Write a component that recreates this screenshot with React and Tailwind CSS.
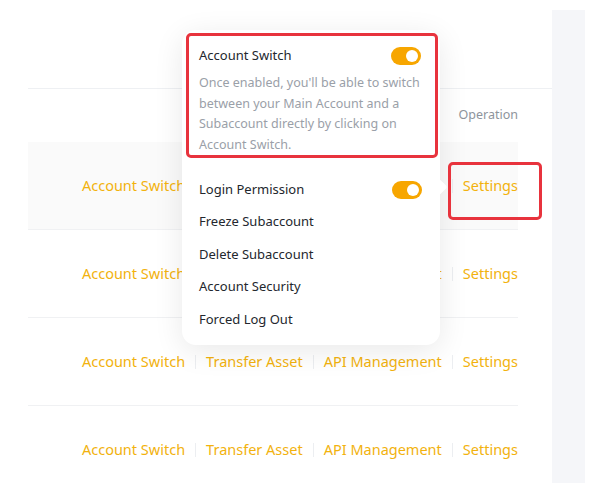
import React from 'react';

const actions = ['Account Switch', 'Transfer Asset', 'API Management', 'Settings'];

function Toggle() {
  return (
    <span className="relative inline-block w-[30px] h-[18px] rounded-full bg-[#f7a600]">
      <span className="absolute right-[3px] top-[3px] w-[12px] h-[12px] rounded-full bg-white" />
    </span>
  );
}

function ActionRow({ hovered, last }) {
  return (
    <div
      className={`h-[88px] mr-[34px] flex items-center justify-end ${last ? '' : 'border-b border-[#f0f1f3]'} ${hovered ? 'bg-[#fafafa]' : ''}`}
    >
      {actions.map((a, i) => (
        <React.Fragment key={a}>
          {i > 0 && <span className="w-px h-[14px] bg-[#eceef1] mx-[10px]" />}
          <span className="text-[14.5px] text-[#f2b20e] whitespace-nowrap">{a}</span>
        </React.Fragment>
      ))}
    </div>
  );
}

export default function App() {
  return (
    <div className="relative w-[600px] h-[500px] bg-white overflow-hidden font-['Noto_Sans',sans-serif]">
      <div className="flex h-full">
        <div className="w-[28px] shrink-0" />

        {/* table */}
        <div className="w-[524px] shrink-0 pt-[88px]">
          <div className="border-t border-[#eef0f3] h-[54px] pr-[34px] flex items-center justify-end">
            <span className="text-[12.5px] text-[#8e949c]">Operation</span>
          </div>
          <ActionRow hovered />
          <ActionRow />
          <ActionRow />
          <ActionRow last />
        </div>

        <div className="w-[33px] shrink-0 mt-[10px] h-[473px] bg-[#f5f6f9]" />
      </div>

      {/* settings popover */}
      <div className="absolute left-[182px] top-[30px] w-[258px] h-[315px] bg-white rounded-[14px] shadow-[0_6px_30px_rgba(0,0,0,0.09)] pt-[3px] pl-[4px] pr-[2px]">
        <div className="absolute right-[-5px] top-[151px] w-[12px] h-[12px] bg-white rotate-45 rounded-[2px]" />
        <div className="relative border-[3px] border-[#e8333d] rounded-[5px] pl-[10px] pr-[14px] pt-[10px] h-[125px]">
          <div className="flex items-center justify-between h-[20px]">
            <span className="text-[13px] text-[#23272e]">Account Switch</span>
            <Toggle />
          </div>
          <p className="mt-[7px] text-[12.5px] leading-[20.7px] text-[#9aa0a8]">
            Once enabled, you'll be able to switch between your Main Account and a Subaccount directly by clicking on Account Switch.
          </p>
        </div>
        <div className="relative pl-[13px] pr-[16px] mt-[15.5px]">
          <div className="h-[32.4px] flex items-center justify-between">
            <span className="text-[13px] text-[#23272e]">Login Permission</span>
            <Toggle />
          </div>
          {['Freeze Subaccount', 'Delete Subaccount', 'Account Security', 'Forced Log Out'].map((t) => (
            <div key={t} className="h-[32.4px] flex items-center">
              <span className="text-[13px] text-[#23272e]">{t}</span>
            </div>
          ))}
        </div>
      </div>

      {/* highlight around Settings */}
      <div className="absolute left-[448px] top-[162px] w-[94px] h-[58px] border-[3px] border-[#e8333d] rounded-[5px]" />
    </div>
  );
}
